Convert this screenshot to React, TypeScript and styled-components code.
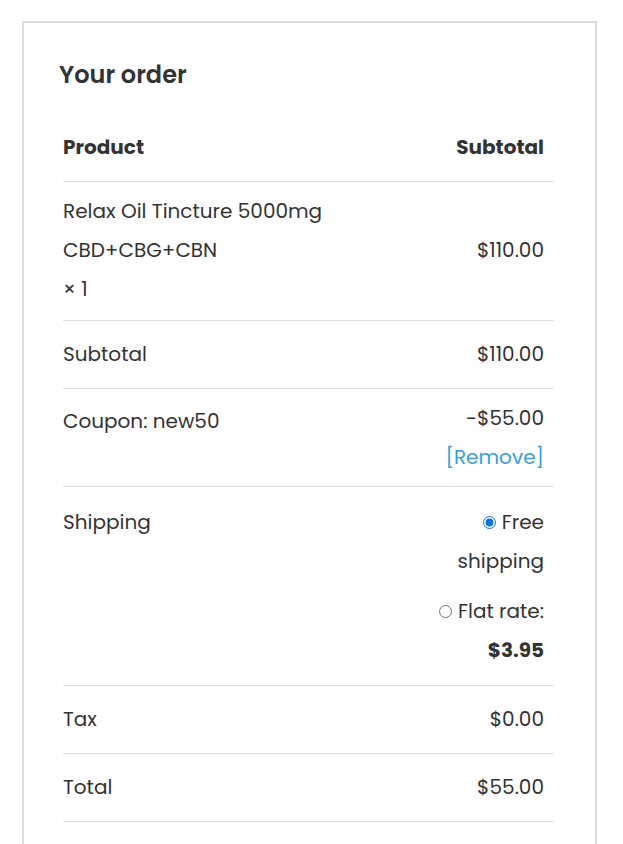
import React from 'react'
import styled, { createGlobalStyle } from 'styled-components'

const GlobalStyle = createGlobalStyle`
  body {
    margin: 0;
    background: #fff;
    font-family: 'Poppins', 'Open Sans', sans-serif;
    color: #333;
  }
`

type Line = {
  label: string;
  value: string;
}

const lines: Line[] = [
  { label: 'Subtotal', value: '$110.00' },
]

const Card = styled.div`
  margin: 21px 0 0 22px;
  width: 575px;
  height: 840px;
  box-sizing: border-box;
  border: 2px solid #dcdcdc;
  border-bottom: none;
  padding: 36px 41px 0 39px;
`

const Heading = styled.h3`
  margin: 0 0 24px -4px;
  font-size: 24px;
  line-height: 31px;
  font-weight: 600;
  color: #333;
`

const Row = styled.div<{ $pad?: string; $align?: string }>`
  display: flex;
  justify-content: space-between;
  align-items: ${p => p.$align || 'flex-start'};
  padding: ${p => p.$pad || '14px 10px 14px 0'};
  border-bottom: 1px solid #e0e0e0;
  font-size: 20px;
  line-height: 39px;
`

const HeadCell = styled.div`
  font-weight: 700;
`

const Cell = styled.div`
  font-weight: 400;
`

const Right = styled.div<{ $shift?: number }>`
  text-align: right;
  margin-top: ${p => p.$shift || 0}px;
`

const RemoveLink = styled.a`
  display: block;
  color: #3a9fd8;
  text-decoration: none;
`

const ShipList = styled.ul`
  list-style: none;
  margin: 0;
  padding: 0;
  text-align: right;
`

const ShipItem = styled.li`
  & + & {
    margin-top: 11px;
  }
`

const Radio = styled.input`
  margin: 0 6px 0 0;
  width: 13px;
  height: 13px;
  vertical-align: 0;
  accent-color: #0b72d9;
`

const Price = styled.strong`
  font-weight: 700;
`

export default function App() {
  return (
    <>
      <GlobalStyle />
      <Card>
        <Heading>Your order</Heading>
        <Row>
          <HeadCell>Product</HeadCell>
          <HeadCell>Subtotal</HeadCell>
        </Row>
        <Row $pad="10px 10px 11px 0" $align="center">
          <Cell>
            Relax Oil Tincture 5000mg
            <br />
            CBD+CBG+CBN
            <br />
            × 1
          </Cell>
          <Cell>$110.00</Cell>
        </Row>
        {lines.map(l => (
          <Row key={l.label}>
            <Cell>{l.label}</Cell>
            <Cell>{l.value}</Cell>
          </Row>
        ))}
        <Row $pad="13px 10px 9px 0">
          <Cell>Coupon: new50</Cell>
          <Right $shift={-3}>
            -$55.00
            <RemoveLink href="#">[Remove]</RemoveLink>
          </Right>
        </Row>
        <Row $pad="16px 10px 15px 0">
          <Cell>Shipping</Cell>
          <ShipList>
            <ShipItem>
              <Radio type="radio" name="ship" defaultChecked />
              Free
              <br />
              shipping
            </ShipItem>
            <ShipItem>
              <Radio type="radio" name="ship" />
              Flat rate:
              <br />
              <Price>$3.95</Price>
            </ShipItem>
          </ShipList>
        </Row>
        <Row>
          <Cell>Tax</Cell>
          <Cell>$0.00</Cell>
        </Row>
        <Row>
          <Cell>Total</Cell>
          <Cell>$55.00</Cell>
        </Row>
      </Card>
    </>
  )
}
